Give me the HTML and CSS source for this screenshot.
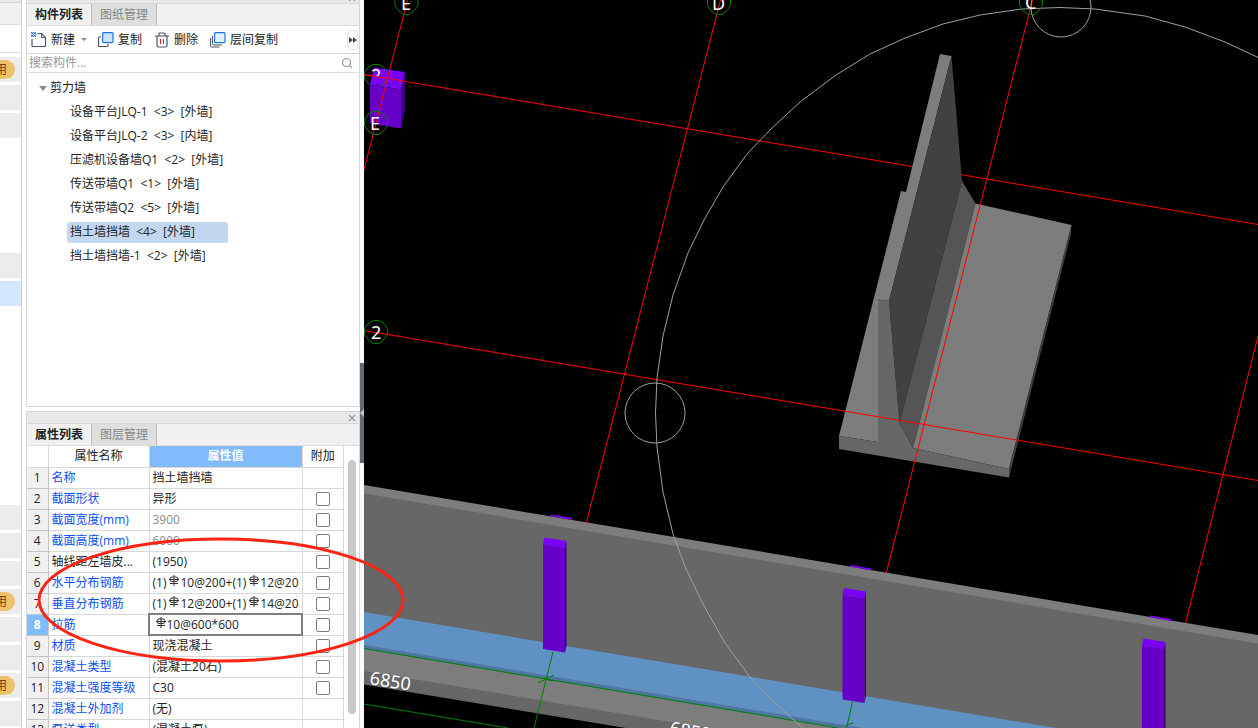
FILE: index.html
```
<!DOCTYPE html>
<html lang="zh-CN">
<head>
  <meta charset="UTF-8" />
  <meta name="viewport" content="width=device-width, initial-scale=1.0"/>
  <title>剪力墙</title>
  <link rel="stylesheet" href="styles.css">
</head>
<body>
  <!-- Shared shapes -->
  <svg class="defs" width="0" height="0">
    <symbol id="close" viewBox="0 0 8 8"><path d="M1 1l6 6M7 1l-6 6" fill="none" stroke="#999" stroke-width="1.3"/></symbol>
    <symbol id="rebar" viewBox="0 0 10 11"><path d="M5 0v11M1 8.500h8M3 2h4q2 0 2 2v.5q0 2-2 2h-4q-2 0-2-2v-.5q0-2 2-2zM0 4.500h10" fill="none" stroke="#333" stroke-width="1"/></symbol>
  </svg>

  <div class="app">
    <!-- Module strip -->
    <div class="strip">
      <div class="titlebar thin"></div>
      <div class="strip-tab"></div>
      <div class="strip-tool"></div>
      <div class="strip-list">
        <div class="cell grey"><span class="badge">用</span></div>
        <div class="cell grey"></div>
        <div class="cell grey"></div>
        <div class="cell"></div>
        <div class="cell"></div>
        <div class="cell"></div>
        <div class="cell"></div>
        <div class="cell grey"></div>
        <div class="cell blue"></div>
        <div class="cell"></div>
        <div class="cell"></div>
        <div class="cell"></div>
        <div class="cell"></div>
        <div class="cell"></div>
        <div class="cell"></div>
        <div class="cell"></div>
        <div class="cell grey"></div>
        <div class="cell grey"></div>
        <div class="cell grey"></div>
        <div class="cell grey"><span class="badge">用</span></div>
        <div class="cell grey"></div>
        <div class="cell grey"></div>
        <div class="cell grey"><span class="badge">用</span></div>
        <div class="cell grey"></div>
      </div>
    </div>

    <div class="dock">
      <!-- Component list -->
      <section class="panel list-panel">
        <div class="titlebar thin"><svg width="8" height="8"><use href="#close"/></svg></div>
        <div class="tabs">
          <button class="tab active">构件列表</button>
          <button class="tab">图纸管理</button>
        </div>
        <div class="toolbar">
          <button class="tool">
            <svg width="16" height="16" viewBox="0 0 16 16" fill="none">
              <path d="M1 7v6.500q0 1 1 1h11.500q1 0 1-1v-8l-4-4h-4" stroke="#4b5563" stroke-width="1.200"/>
              <path d="M10.500 1.500v4h4" stroke="#4b5563"/>
              <path d="M0 0l5 5M2.500 0l2.500 2.500M0 2.500l2.500 2.500M5 0l-5 5M2.500 0l-2.500 2.500M5 2.500l-2.500 2.500" stroke="#1a73e8"/>
            </svg>
            新建
          </button>
          <span class="caret small"></span>
          <button class="tool copy">
            <svg width="16" height="16" viewBox="0 0 16 16" fill="none">
              <path d="M3 5h-1.500q-1 0-1 1v7.500q0 1 1 1h7.500q1 0 1-1v-1.500" stroke="#4b5563" stroke-width="1.200"/>
              <rect x="4.600" y=".6" width="10.400" height="10" rx="1" fill="#cfe2ff" stroke="#1a73e8" stroke-width="1.200"/>
            </svg>
            复制
          </button>
          <button class="tool delete">
            <svg width="14" height="16" viewBox="0 0 14 16" fill="none">
              <path d="M0 4h14M2 4v9.500q0 1.500 1.500 1.500h7q1.500 0 1.500-1.500v-9.500M4 4v-2q0-1 1-1h4q1 0 1 1v2" stroke="#4b5563" stroke-width="1.200"/>
              <path d="M5.500 7v5M8.500 7v5" stroke="#e02020"/>
            </svg>
            删除
          </button>
          <button class="tool floor">
            <svg width="16" height="16" viewBox="0 0 16 16" fill="none">
              <path d="M.5 6v8q0 1 1 1h8M2.500 4v7.500q0 1.500 1.500 1.500h8" stroke="#4b5563"/>
              <rect x="4.600" y=".6" width="10.400" height="10" rx="1" fill="#e3efff" stroke="#1a73e8" stroke-width="1.200"/>
            </svg>
            层间复制
          </button>
          <button class="more" aria-label="更多">
            <svg width="8" height="6" viewBox="0 0 8 6"><path d="M0 0l4 3-4 3zM4 0l4 3-4 3z" fill="#444"/></svg>
          </button>
        </div>
        <div class="search">
          <input type="text" placeholder="搜索构件..." aria-label="搜索构件">
          <svg width="12" height="12" viewBox="0 0 12 12" fill="none" stroke="#999" stroke-width="1.200"><circle cx="5.500" cy="5.500" r="4"/><path d="M8.500 8.500l2.500 2.500"/></svg>
        </div>
        <ul class="tree">
          <li class="root"><span class="caret"></span>剪力墙</li>
          <li><span class="node">设备平台JLQ-1  &lt;3&gt;  [外墙]</span></li>
          <li><span class="node">设备平台JLQ-2  &lt;3&gt;  [内墙]</span></li>
          <li><span class="node">压滤机设备墙Q1  &lt;2&gt;  [外墙]</span></li>
          <li><span class="node">传送带墙Q1  &lt;1&gt;  [外墙]</span></li>
          <li><span class="node">传送带墙Q2  &lt;5&gt;  [外墙]</span></li>
          <li><span class="node selected">挡土墙挡墙  &lt;4&gt;  [外墙]</span></li>
          <li><span class="node">挡土墙挡墙-1  &lt;2&gt;  [外墙]</span></li>
        </ul>
      </section>

      <!-- Property list -->
      <section class="panel prop-panel">
        <div class="titlebar"><svg width="8" height="8"><use href="#close"/></svg></div>
        <div class="tabs">
          <button class="tab active">属性列表</button>
          <button class="tab">图层管理</button>
        </div>
        <div class="props">
          <table>
            <thead>
              <tr><th class="num"></th><th class="name">属性名称</th><th class="value">属性值</th><th class="extra">附加</th></tr>
            </thead>
            <tbody>
              <tr><th>1</th><td class="link">名称</td><td>挡土墙挡墙</td><td></td></tr>
              <tr><th>2</th><td class="link">截面形状</td><td>异形</td><td><input type="checkbox" aria-label="截面形状"></td></tr>
              <tr><th>3</th><td class="link">截面宽度(mm)</td><td class="muted">3900</td><td><input type="checkbox" aria-label="截面宽度"></td></tr>
              <tr><th>4</th><td class="link">截面高度(mm)</td><td class="muted">6000</td><td><input type="checkbox" aria-label="截面高度"></td></tr>
              <tr><th>5</th><td>轴线距左墙皮...</td><td>(1950)</td><td><input type="checkbox" aria-label="轴线距左墙皮"></td></tr>
              <tr><th>6</th><td class="link">水平分布钢筋</td><td>(1)<svg class="rebar"><use href="#rebar"/></svg>10@200+(1)<svg class="rebar"><use href="#rebar"/></svg>12@20</td><td><input type="checkbox" aria-label="水平分布钢筋"></td></tr>
              <tr><th>7</th><td class="link">垂直分布钢筋</td><td>(1)<svg class="rebar"><use href="#rebar"/></svg>12@200+(1)<svg class="rebar"><use href="#rebar"/></svg>14@20</td><td><input type="checkbox" aria-label="垂直分布钢筋"></td></tr>
              <tr class="current"><th>8</th><td class="link">拉筋</td><td class="editing"><svg class="rebar"><use href="#rebar"/></svg>10@600*600</td><td><input type="checkbox" aria-label="拉筋"></td></tr>
              <tr><th>9</th><td class="link">材质</td><td>现浇混凝土</td><td><input type="checkbox" aria-label="材质"></td></tr>
              <tr><th>10</th><td class="link">混凝土类型</td><td>(混凝土20石)</td><td><input type="checkbox" aria-label="混凝土类型"></td></tr>
              <tr><th>11</th><td class="link">混凝土强度等级</td><td>C30</td><td><input type="checkbox" aria-label="混凝土强度等级"></td></tr>
              <tr><th>12</th><td class="link">混凝土外加剂</td><td>(无)</td><td></td></tr>
              <tr><th>13</th><td class="link">泵送类型</td><td>(混凝土泵)</td><td></td></tr>
            </tbody>
          </table>
          <div class="scroll"><div class="thumb"></div></div>
        </div>
      </section>
    </div>

    <div class="splitter"><button class="handle" aria-label="收起"><svg width="4" height="8" viewBox="0 0 4 8"><path d="M4 0v8l-4-4z" fill="#c0c4c8"/></svg></button></div>

    <!-- 3D view -->
    <main class="view">
      <svg class="scene" viewBox="364 0 894 728" preserveAspectRatio="xMinYMin slice">
        <defs>
          <path id="bubble" d="M-3-11.500h6l5 3 3.500 5v6l-3.500 5-5 4h-6l-5-4-3.500-5v-6l3.500-5z" fill="none" stroke="#008000"/>
          <clipPath id="half"><rect x="364" y="60" width="30" height="17"/></clipPath>
          <g id="post">
            <path fill="#7b00f8" d="M551 514.500l21 3.500v2l-22-4z"/>
            <path fill="#7b00f8" d="M544.500 537.500l22 3.500-1.500 7-22-3.500z"/>
            <path fill="#6600c8" d="M543 544.500l22 3.500v104.500l-22-3.500z"/>
            <path fill="#3c0078" d="M565 548l1.500-7v104.500l-1.500 7z"/>
          </g>
        </defs>
        <rect x="364" width="894" height="728" fill="#000"/>

        <!-- far grid line, hidden by the wall -->
        <path class="axis" d="M364 74.500L1258 224.500"/>

        <!-- retaining wall -->
        <path fill="#7d7d7d" d="M839 436L901 191l5 1L940 54l11.500 2L889 301l-11-1.500V442z"/>
        <path fill="#414141" d="M951.500 56L962 181 899.500 423 889 301z"/>
        <path fill="#555" d="M962 181l13.500 22.500L913 448l-13.500-25z"/>
        <path fill="#7d7d7d" d="M975.500 203.500l96 21.500L1009 469l-96-21z"/>
        <path fill="#676767" d="M878 299.500l11 1.500 10.500 122 13.500 25 96 21v8.500L839 449v-13l39 6z"/>
        <path fill="#3f3f3f" d="M1071.500 225l-.5 9-62 243.500V469z"/>

        <!-- column at E/2 -->
        <path fill="#7b00f8" d="M374 67.500l31 4.500-4 17.500-31-5z"/>
        <use href="#bubble" x="376" y="76"/>
        <path fill="#6600c8" d="M370 84.500l31 5v39l-31-5z"/>
        <path fill="#3c0078" d="M405 72v39l-4 17.500v-39z"/>
        <text class="label" x="371" y="82" clip-path="url(#half)">2</text>

        <!-- axes -->
        <path class="axis" d="M407.500 0L364 170M364 74.500l42 7M720.500 0L586 524M1032.500 0L886 574M1258 336l-73 289M364 330.500L1258 480.500"/>

        <!-- long wall -->
        <path fill="#7d7d7d" d="M364 485l894 150v20L364 505z"/>
        <path fill="#676767" d="M364 493.500l894 150V728H626L364 684.500z"/>
        <path fill="#7d7d7d" d="M364 645l498 83H706l-342-57z"/>
        <path fill="#6091c3" d="M364 612l692 116H858L364 645z"/>
        <path fill="#4d76a0" d="M364 645l498 83h-24l-474-79z"/>
        <use href="#post"/>
        <use href="#post" x="299.500" y="50.500"/>
        <use href="#post" x="599" y="101"/>

        <!-- dimensions -->
        <path class="dim" d="M364 648.500l474 79.500M364 704l144 24M553 652l-19 76M852.500 702l-6 26M538 683l16-8M541 678l12 3M846 725l7-2"/>
        <text class="dim-text" transform="translate(369 684) rotate(9.500)">6850</text>
        <text class="dim-text" transform="translate(669 734) rotate(9.500)">6850</text>

        <!-- orbit sphere -->
        <g fill="none" stroke="#a0a0a0">
          <path d="M1270 63L1225 42 1185 27 1145 16 1095 9 1060 7.500 1022 9 980 15 943 24 905 38 870 54 836 75 800 102 771 129 747 154 723 187 704 220 688 253 673 295 663 336 657 378 655.500 413 657 447 663 492 673 534 686 569 704 606 725 643 750 677 774 702 805 730"/>
          <circle cx="655" cy="413" r="30"/>
          <circle cx="1061" cy="7" r="30"/>
        </g>

        <!-- axis bubbles -->
        <use href="#bubble" x="406.500" y="3"/>
        <use href="#bubble" x="719" y="3"/>
        <use href="#bubble" x="1031" y="3"/>
        <use href="#bubble" x="376" y="123"/>
        <use href="#bubble" x="376" y="332"/>
        <text class="label" x="401" y="10">E</text>
        <text class="label" x="712" y="10">D</text>
        <text class="label" x="1025" y="9">C</text>
        <text class="label" x="370" y="130">E</text>
        <text class="label" x="371" y="339">2</text>
      </svg>
    </main>
  </div>

  <!-- Markup ring -->
  <svg class="ring" width="370" height="128" viewBox="0 0 370 128"><ellipse cx="185" cy="64" rx="182" ry="61" fill="none" stroke="#ff2312" stroke-width="3"/></svg>
</body>
</html>
```
FILE: styles.css
```
* {
  box-sizing: border-box;
}

body {
  margin: 0;
  height: 100vh;
  overflow: hidden;
  background: #fff;
  color: #222;
  font: 12px/20px "Open Sans", "Noto Sans CJK SC", sans-serif;
}

button,
input {
  font: inherit;
  color: inherit;
  margin: 0;
  padding: 0;
  border: none;
  background: none;
}

svg {
  display: block;
  flex: none;
}

.defs {
  position: absolute;
}

.app {
  display: flex;
  height: 100vh;
}

/* module strip */
.strip {
  width: 22px;
  flex: none;
  overflow: hidden;
  border-right: 1px solid #d2d2d2;
}

.strip-tab {
  height: 22px;
  background: #f0f0f0;
  border-bottom: 1px solid #dcdcdc;
}

.strip-tool {
  height: 28px;
  border-bottom: 1px solid #dcdcdc;
}

.strip-list {
  display: flex;
  flex-direction: column;
  gap: 3px;
  padding-top: 4px;
}

.cell {
  height: 25px;
  flex: none;
  display: flex;
  align-items: center;
}

.cell.grey {
  background: #ececec;
}

.cell.blue {
  background: #d3e8ff;
}

.badge {
  flex: none;
  width: 36px;
  height: 19px;
  margin-left: -21px;
  padding-right: 8px;
  border-radius: 10px;
  background: #eec26c;
  color: #7a3c08;
  line-height: 19px;
  text-align: right;
}

/* docked panels */
.dock {
  width: 334px;
  flex: none;
  margin-left: 4px;
  display: flex;
  flex-direction: column;
  gap: 4px;
}

.panel {
  border: 1px solid #d6d6d6;
  overflow: hidden;
}

.list-panel {
  flex: 0 0 407px;
  border-top: none;
}

.prop-panel {
  flex: 1;
  border-bottom: none;
}

.titlebar {
  height: 12px;
  padding: 1px 3px;
  display: flex;
  justify-content: flex-end;
  align-items: flex-end;
  overflow: hidden;
  background: #e8e8e8;
  border-bottom: 1px solid #d6d6d6;
}

.titlebar.thin {
  height: 4px;
}

.strip .titlebar.thin {
  height: 3px;
}

.tabs {
  display: flex;
  height: 22px;
  background: #f0f0f0;
  border-bottom: 1px solid #dcdcdc;
}

.tab {
  width: 65px;
  border-right: 1px solid #bcbcc0;
  background: #dfdfdf;
  color: #868686;
}

.tab.active {
  background: #f0f0f0;
  color: #222;
  font-weight: bold;
}

.toolbar {
  display: flex;
  align-items: center;
  height: 28px;
  padding-left: 4px;
  border-bottom: 1px solid #dcdcdc;
}

.tool {
  display: flex;
  align-items: center;
  gap: 4px;
}

.caret {
  border: 4px solid transparent;
  border-top: 5px solid #888;
  border-bottom: none;
}

.caret.small {
  margin-left: 6px;
  border-width: 3px;
  border-bottom-width: 0;
}

.copy {
  margin-left: 11px;
}

.delete {
  margin-left: 13px;
  gap: 5px;
}

.floor {
  margin-left: 12px;
}

.more {
  display: flex;
  align-items: center;
  justify-content: center;
  width: 11px;
  height: 20px;
  margin: 0 1px 0 auto;
  border: 1px solid #e6e6e6;
  border-radius: 3px;
}

.search {
  display: flex;
  align-items: center;
  height: 19px;
  padding: 0 6px 0 2px;
  border-bottom: 1px solid #dcdcdc;
}

.search input {
  flex: 1;
  min-width: 0;
  height: 18px;
  outline: none;
}

.search input::placeholder {
  color: #999;
}

.tree {
  list-style: none;
  margin: 0;
  padding: 3px 0 0 40px;
}

.tree li {
  display: flex;
  align-items: center;
  height: 24px;
}

.tree .root {
  margin-left: -28px;
  gap: 3px;
}

.node {
  height: 21px;
  line-height: 19px;
  min-width: 161px;
  padding: 0 3px;
  border-radius: 3px;
  white-space: pre;
}

.node.selected {
  background: #c2d8f1;
}

/* property table */
.props {
  display: flex;
}

table {
  table-layout: fixed;
  width: 317px;
  border-collapse: collapse;
}

th,
td {
  height: 21px;
  padding: 0 3px;
  overflow: hidden;
  white-space: nowrap;
  text-align: left;
  line-height: 20px;
  font-weight: normal;
  border-right: 1px solid #d8d8d8;
  border-bottom: 1px solid #d8d8d8;
}

thead th {
  text-align: center;
}

.num {
  width: 21px;
}

.name {
  width: 101px;
}

.value {
  width: 153px;
  background: #80bbfb;
  color: #fff;
  font-weight: bold;
}

tbody th {
  padding: 0;
  text-align: center;
  background: #f0f0f0;
  border-color: #c4c4c4;
}

.current th {
  background: #80bbfb;
  color: #fff;
  font-weight: bold;
}

.link {
  color: #0a50f0;
}

.muted {
  color: #8c8c8c;
}

.editing {
  outline: 2px solid #7f7f7f;
  outline-offset: -1px;
}

.rebar {
  display: inline-block;
  width: 10px;
  height: 11px;
  margin: 0 1px 0 3px;
  vertical-align: 1px;
}

input[type="checkbox"] {
  appearance: none;
  display: block;
  width: 14px;
  height: 14px;
  margin: 0 auto;
  border: 1px solid #7c7c7c;
  border-radius: 2px;
  background: #fff;
}

.scroll {
  flex: 1;
  padding: 14px 0 0 4px;
}

.thumb {
  width: 8px;
  height: 254px;
  border-radius: 4px;
  background: #c9c9c9;
}

.splitter {
  width: 4px;
  flex: none;
  display: flex;
  align-items: center;
  background: #fafaff;
}

.handle {
  width: 4px;
  height: 100px;
  margin-top: 98px;
  background: #5f6b76;
}

/* 3D view */
.view {
  flex: 1;
  min-width: 0;
  background: #000;
}

.scene {
  width: 100%;
  height: 100%;
}

.axis {
  fill: none;
  stroke: #f00;
  stroke-width: 1;
}

.dim {
  fill: none;
  stroke: #008000;
  stroke-width: 1;
}

.label,
.dim-text {
  fill: #fff;
  font: 18px "Noto Sans", sans-serif;
}

.ring {
  position: absolute;
  left: 36px;
  top: 536px;
  pointer-events: none;
}
```
